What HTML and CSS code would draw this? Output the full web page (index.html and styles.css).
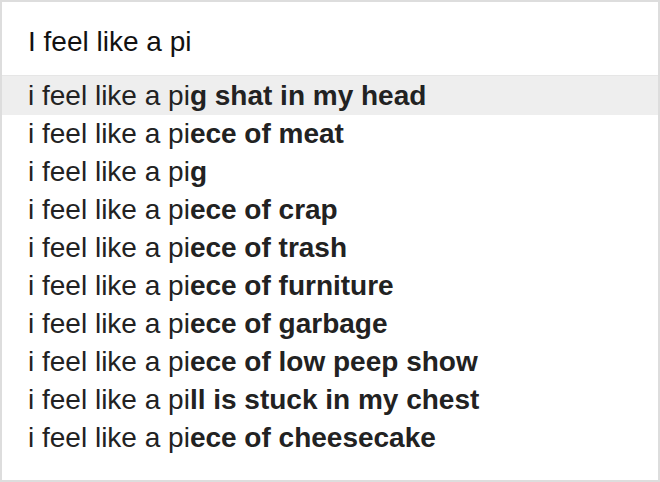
FILE: index.html
```html
<!DOCTYPE html>
<html>
<head>
<meta charset="utf-8">
<link rel="stylesheet" href="styles.css">
</head>
<body>
<div class="box">
  <div class="query">I feel like a pi</div>
  <ul class="list">
    <li class="item active">i feel like a pi<b>g shat in my head</b></li>
    <li class="item">i feel like a pi<b>ece of meat</b></li>
    <li class="item">i feel like a pi<b>g</b></li>
    <li class="item">i feel like a pi<b>ece of crap</b></li>
    <li class="item">i feel like a pi<b>ece of trash</b></li>
    <li class="item">i feel like a pi<b>ece of furniture</b></li>
    <li class="item">i feel like a pi<b>ece of garbage</b></li>
    <li class="item">i feel like a pi<b>ece of low peep show</b></li>
    <li class="item">i feel like a pi<b>ll is stuck in my chest</b></li>
    <li class="item">i feel like a pi<b>ece of cheesecake</b></li>
  </ul>
</div>
</body>
</html>
```
FILE: styles.css
```css
html, body {
  margin: 0;
  padding: 0;
  background: #fff;
}
.box {
  width: 660px;
  height: 482px;
  box-sizing: border-box;
  border: 2px solid #dddddd;
  font-family: "Liberation Sans", Arial, sans-serif;
  font-size: 28px;
  color: #222;
}
.query {
  padding: 21px 26px 14px 26px;
  line-height: 38px;
  color: #111;
  border-bottom: 1px solid #e6e6e6;
}
.list {
  list-style: none;
  margin: 0;
  padding: 0 0 24px 0;
}
.item {
  padding: 2px 26px 0 26px;
  height: 38px;
  line-height: 36px;
  box-sizing: border-box;
  white-space: nowrap;
}
.item b {
  font-weight: bold;
}
.active {
  background: #eeeeee;
  height: 39px;
  margin-bottom: -1px;
}
```
